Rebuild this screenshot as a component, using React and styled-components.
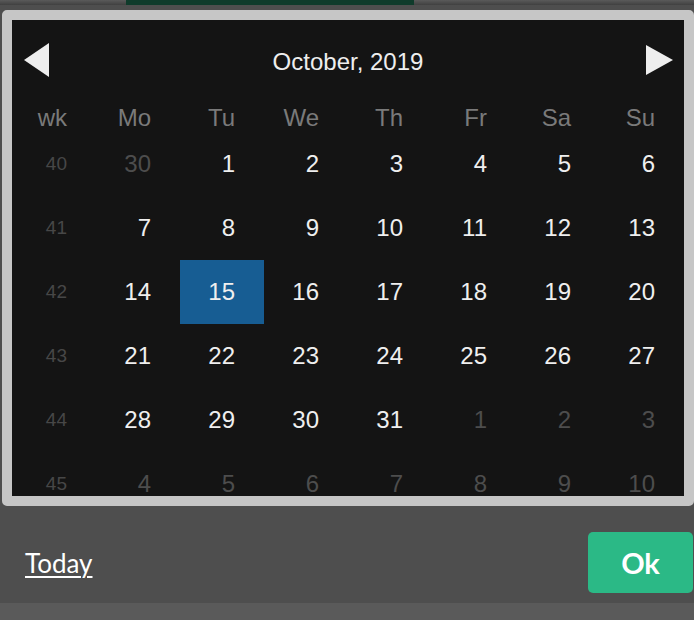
import React from 'react'
import styled, { createGlobalStyle } from 'styled-components'

const GlobalStyle = createGlobalStyle`
  html, body {
    margin: 0;
    padding: 0;
    background: #5a5a5a;
    font-family: "Liberation Sans", Arial, sans-serif;
  }
`

const Modal = styled.div`
  width: 694px;
  background: #4e4e4e;
  box-shadow: 0 5px 10px rgba(0, 0, 0, 0.6);
`

const TopStrip = styled.div`
  height: 5px;
  margin-bottom: 5px;
  background: linear-gradient(#5a5a5a, #404040);
  display: flex;
`

const GreenBar = styled.div`
  margin-left: 126px;
  width: 288px;
  background: #0f3b2b;
`

const Panel = styled.div`
  margin-left: 2px;
  width: 672px;
  border: 10px solid #c6c6c6;
  border-radius: 5px;
  background: #141414;
`

const Scroller = styled.div`
  height: 476px;
  overflow: hidden;
`

const Nav = styled.div`
  height: 80px;
  display: flex;
  align-items: center;
  justify-content: space-between;
  padding: 0 11px;
`

const Title = styled.div`
  font-size: 24px;
  color: #eeeeee;
  padding-top: 3px;
`

const Arrow = styled.svg`
  width: 27px;
  height: 34px;
  display: block;
`

const Grid = styled.div`
  display: grid;
  grid-template-columns: repeat(8, 84px);
`

const HeadCell = styled.div`
  height: 32px;
  box-sizing: border-box;
  padding-top: 4px;
  display: flex;
  align-items: center;
  justify-content: flex-end;
  padding-right: 29px;
  font-size: 24px;
  color: #7a7a7a;
`

const Cell = styled.div`
  height: 64px;
  display: flex;
  align-items: center;
  justify-content: flex-end;
  padding-right: 29px;
  font-size: ${p => (p.$week ? '19px' : '24px')};
  color: ${p => (p.$week ? '#474747' : p.$muted ? '#4d4d4d' : '#efefef')};
  background: ${p => (p.$selected ? '#175d93' : 'transparent')};
`

const Footer = styled.div`
  height: 97px;
  box-sizing: border-box;
  display: flex;
  align-items: center;
  justify-content: space-between;
  padding: 16px 1px 0 25px;
`

const TodayLink = styled.a`
  font-family: Lato, "Liberation Sans", sans-serif;
  font-size: 26px;
  color: #ffffff;
  text-decoration: underline;
  text-underline-offset: 3px;
  text-decoration-thickness: 2px;
  cursor: pointer;
`

const OkButton = styled.button`
  width: 105px;
  height: 61px;
  border: none;
  border-radius: 5px;
  background: #2bb986;
  color: #ffffff;
  font-family: Lato, "Liberation Sans", sans-serif;
  font-weight: 700;
  font-size: 29px;
  cursor: pointer;
`

const days = ['Mo', 'Tu', 'We', 'Th', 'Fr', 'Sa', 'Su']

const weeks = [
  { wk: 40, days: [[30, true], 1, 2, 3, 4, 5, 6] },
  { wk: 41, days: [7, 8, 9, 10, 11, 12, 13] },
  { wk: 42, days: [14, 15, 16, 17, 18, 19, 20] },
  { wk: 43, days: [21, 22, 23, 24, 25, 26, 27] },
  { wk: 44, days: [28, 29, 30, 31, [1, true], [2, true], [3, true]] },
  { wk: 45, days: [[4, true], [5, true], [6, true], [7, true], [8, true], [9, true], [10, true]] },
]

export default function App() {
  return (
    <>
      <GlobalStyle />
      <Modal>
        <TopStrip>
          <GreenBar />
        </TopStrip>
        <Panel>
          <Scroller>
            <Nav>
              <Arrow viewBox="0 0 27 34">
                <polygon points="1,17 26,0 26,34" fill="#eeeeee" />
              </Arrow>
              <Title>October, 2019</Title>
              <Arrow viewBox="0 0 27 34">
                <polygon points="0,2 27,17 0,32" fill="#eeeeee" />
              </Arrow>
            </Nav>
            <Grid>
              <HeadCell>wk</HeadCell>
              {days.map(d => (
                <HeadCell key={d}>{d}</HeadCell>
              ))}
              {weeks.map(w => (
                <React.Fragment key={w.wk}>
                  <Cell $week>{w.wk}</Cell>
                  {w.days.map((d, i) => {
                    const muted = Array.isArray(d)
                    const n = muted ? d[0] : d
                    return (
                      <Cell key={i} $muted={muted} $selected={!muted && n === 15}>
                        {n}
                      </Cell>
                    )
                  })}
                </React.Fragment>
              ))}
            </Grid>
          </Scroller>
        </Panel>
        <Footer>
          <TodayLink>Today</TodayLink>
          <OkButton>Ok</OkButton>
        </Footer>
      </Modal>
    </>
  )
}
